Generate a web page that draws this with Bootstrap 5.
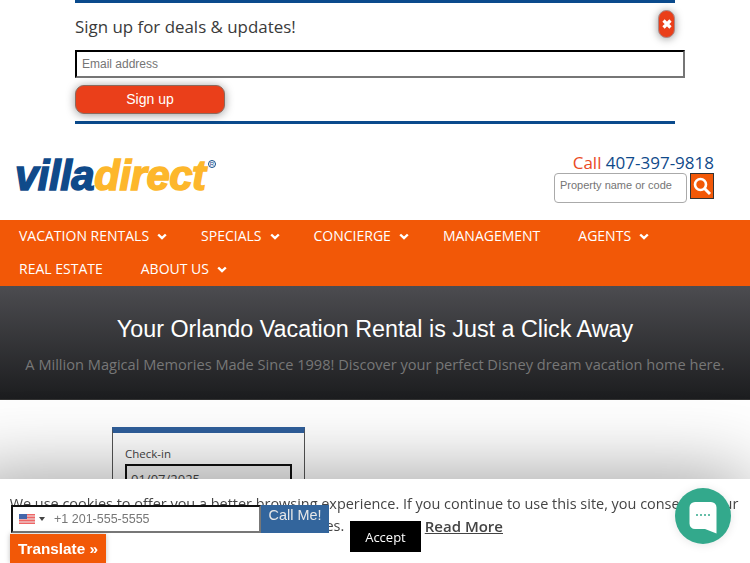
<!DOCTYPE html>
<html lang="en">
<head>
  <meta charset="UTF-8">
  <title>Villa Direct</title>
  <link href="https://cdn.jsdelivr.net/npm/bootstrap@5.3.2/dist/css/bootstrap.min.css" rel="stylesheet">
  <style>
    html, body { height: 563px; overflow: hidden; }
    body { font-family: "Open Sans", sans-serif; color: #333; background: #fff; }
    .signup-box { width: 600px; height: 124px; margin-left: 75px; border-top: 3px solid #0a4a8c; border-bottom: 3px solid #0a4a8c; position: relative; }
    .signup-title { font-size: 16.9px; line-height: 24px; padding-top: 12px; margin: 0 0 11px; color: #3a3a3a; }
    .signup-input { display: block; width: 610px; height: 28px; border: 2px inset #555; border-color: #111 #767676 #767676 #111; font: 12px "Liberation Sans", sans-serif; padding: 0 5px; }
    .signup-input::placeholder, .search-input::placeholder { color: #757575; opacity: 1; }
    .signup-btn { display: block; width: 150px; height: 29px; margin-top: 7px; background: #ea3f1a; color: #fff; border: 1px solid #8a6a5e; border-radius: 9px; font: 14px "Liberation Sans", sans-serif; box-shadow: 0 1px 10px rgba(0,0,0,.4); padding: 0 0 2px; }
    .close-pill { position: absolute; left: 583px; top: 7px; width: 17px; height: 28px; border-radius: 9px; background: #ea3f1a; border: 1px solid #a88; box-shadow: 0 1px 8px rgba(0,0,0,.4); display: flex; align-items: center; justify-content: center; }
    .site-head { height: 96px; padding: 0 36px 0 15px; }
    .brand-logo { font: italic 900 42px/1 "Liberation Sans", sans-serif; letter-spacing: -.5px; -webkit-text-stroke: 1.5px currentColor; position: relative; margin-top: 31px; white-space: nowrap; height: 42px; }
    .brand-blue { color: #0f4a8a; }
    .brand-gold { color: #fdb72b; }
    .brand-reg { position: absolute; left: 193px; top: 5px; width: 8px; height: 8px; border: 1px solid #0f4a8a; border-radius: 50%; font: 6px/6px "Liberation Sans", sans-serif; text-align: center; color: #0f4a8a; -webkit-text-stroke: 0; letter-spacing: 0; }
    .call-line { font-size: 17px; line-height: 21px; color: #0f4a8a; margin-top: 28px; text-align: right; }
    .call-word { color: #ea4a1f; }
    .search-input { width: 133px; height: 30px; border: 1px solid #aaa; border-radius: 4px; font: 11px "Liberation Sans", sans-serif; padding: 0 5px 6px; }
    .search-btn { width: 24px; height: 26px; background: #f25807; border: 1px solid #333; display: flex; align-items: center; justify-content: center; margin-left: 3px; }
    .main-nav { height: 66px; background: #f25807; padding-left: 19px; }
    .nav-entry { color: #fff; font-size: 14px; height: 33px; padding-bottom: 2px; text-decoration: none; white-space: nowrap; display: flex; align-items: center; gap: 8px; margin-right: 34px; }
    .nav-plain { margin-right: 38px; }
    .nav-entry svg { margin-top: 1px; }
    .hero-band { height: 114px; background: linear-gradient(#4c4c50, #1c1d1f); border-bottom: 1px solid #333; text-align: center; padding-top: 27px; }
    .hero-title { font: 23.3px/32px "Liberation Sans", sans-serif; color: #fff; margin: 0; }
    .hero-sub { font-size: 14.6px; line-height: 22px; color: #777; margin: 8px 0 0; }
    .booking-card { width: 193px; height: 100px; margin: 27px 0 0 112px; border: 1px solid #555; border-top: 6px solid #2f5f9c; padding: 12px; font-size: 11.5px; color: #444; }
    .booking-date { height: 30px; border: 2px solid #111; margin-top: 2px; padding: 4px; font-size: 13px; color: #444; background: #f4f4f4; }
    .cookie-bar { position: fixed; left: -40px; right: 0; top: 479px; height: 84px; background: #fff; text-align: center; font-size: 14.45px; line-height: 22px; color: #444; padding: 14px 10px 0 48px; box-shadow: 0 0 80px rgba(0,0,0,.42); }
    .accept-btn { background: #000; color: #fff; border: 0; width: 71px; height: 31px; font-size: 13px; padding: 0; margin: 6px 0 0 2px; vertical-align: top; }
    .read-more { color: #444; font-weight: 600; font-size: 15px; vertical-align: top; }
    .call-widget { position: fixed; left: 11px; top: 505px; height: 28px; }
    .call-field { width: 250px; height: 28px; border: 2px solid #111; border-right-color: #777; border-bottom-color: #777; background: #fff; font: 12.5px "Liberation Sans", sans-serif; color: #777; padding-left: 6px; gap: 4px; }
    .call-btn { width: 68px; height: 28px; background: #33659c; color: #e8e8e8; border: 0; font: 14.4px/20px "Liberation Sans", sans-serif; padding: 0 0 8px; }
    .drop-caret { width: 0; height: 0; border: 3px solid transparent; border-top: 4px solid #444; border-bottom: 0; margin-right: 5px; }
    .translate-tab { position: fixed; left: 10px; top: 534px; width: 96px; height: 29px; background: #f25807; color: #fff; font: bold 15.3px/29px "Liberation Sans", sans-serif; text-align: center; box-shadow: 0 0 5px rgba(0,0,0,.25); }
    .chat-bubble { position: fixed; left: 675px; top: 488px; width: 56px; height: 56px; border-radius: 50%; background: #33a98c; box-shadow: 0 1px 10px rgba(0,0,0,.1); display: flex; align-items: center; justify-content: center; }
    .chat-bubble svg { margin-top: 3px; }
  </style>
</head>
<body>
  <div class="signup-box">
    <p class="signup-title">Sign up for deals &amp; updates!</p>
    <input type="text" class="signup-input" placeholder="Email address">
    <button type="button" class="signup-btn">Sign up</button>
    <div class="close-pill">
      <svg width="12" height="12" viewBox="0 0 12 12"><path d="M2.500 2.500l7 7M9.500 2.500l-7 7" stroke="#fff" stroke-width="3.2"/></svg>
    </div>
  </div>

  <div class="site-head d-flex justify-content-between">
    <div class="brand-logo"><span class="brand-blue">villa</span><span class="brand-gold">direct</span><span class="brand-reg">R</span></div>
    <div>
      <div class="call-line"><span class="call-word">Call</span> 407-397-9818</div>
      <div class="d-flex">
        <input type="text" class="search-input" placeholder="Property name or code">
        <div class="search-btn">
          <svg width="20" height="20" viewBox="0 0 20 20" fill="none" stroke="#fff"><circle cx="8.5" cy="8.5" r="5.5" stroke-width="2.6"/><path d="M12.5 12.5l5.5 5.5" stroke-width="3"/></svg>
        </div>
      </div>
    </div>
  </div>

  <nav class="main-nav">
    <div class="d-flex">
      <a class="nav-entry" href="#">VACATION RENTALS <svg width="10" height="7" viewBox="0 0 10 7" fill="none"><path d="M1.200 1.500L5 5.200l3.800-3.700" stroke="#fff" stroke-width="2.400"/></svg></a>
      <a class="nav-entry" href="#">SPECIALS <svg width="10" height="7" viewBox="0 0 10 7" fill="none"><path d="M1.200 1.500L5 5.200l3.800-3.700" stroke="#fff" stroke-width="2.400"/></svg></a>
      <a class="nav-entry" href="#">CONCIERGE <svg width="10" height="7" viewBox="0 0 10 7" fill="none"><path d="M1.200 1.500L5 5.200l3.800-3.700" stroke="#fff" stroke-width="2.400"/></svg></a>
      <a class="nav-entry nav-plain" href="#">MANAGEMENT</a>
      <a class="nav-entry" href="#">AGENTS <svg width="10" height="7" viewBox="0 0 10 7" fill="none"><path d="M1.200 1.500L5 5.200l3.800-3.700" stroke="#fff" stroke-width="2.400"/></svg></a>
    </div>
    <div class="d-flex">
      <a class="nav-entry nav-plain" href="#">REAL ESTATE</a>
      <a class="nav-entry" href="#">ABOUT US <svg width="10" height="7" viewBox="0 0 10 7" fill="none"><path d="M1.200 1.500L5 5.200l3.800-3.700" stroke="#fff" stroke-width="2.400"/></svg></a>
    </div>
  </nav>

  <section class="hero-band">
    <h1 class="hero-title">Your Orlando Vacation Rental is Just a Click Away</h1>
    <p class="hero-sub">A Million Magical Memories Made Since 1998! Discover your perfect Disney dream vacation home here.</p>
  </section>

  <div class="booking-card">
    Check-in
    <div class="booking-date">01/07/2025</div>
  </div>

  <div class="cookie-bar">
    We use cookies to offer you a better browsing experience. If you continue to use this site, you consent to our use of cookies. <button type="button" class="accept-btn">Accept</button> <a class="read-more" href="#">Read More</a>
  </div>

  <div class="call-widget d-flex">
    <div class="call-field d-flex align-items-center">
      <svg width="16" height="10" viewBox="0 0 16 10"><rect width="16" height="10" fill="#e66"/><path d="M0 2h16M0 5h16M0 8h16" stroke="#eee"/><rect width="8" height="5" fill="#46a"/></svg>
      <span class="drop-caret"></span>
      <span>+1 201-555-5555</span>
    </div>
    <button type="button" class="call-btn">Call Me!</button>
  </div>
  <div class="translate-tab">Translate »</div>
  <div class="chat-bubble">
    <svg width="28" height="34" viewBox="0 0 28 34"><path d="M6 1h16a5.500 5.500 0 0 1 5.500 5.500V32.500L16 28H6a5.500 5.500 0 0 1-5.500-5.500V6.500A5.500 5.500 0 0 1 6 1z" fill="#fff"/><path d="M7 14h2M11 14h2M15 14h2M19 14h2" stroke="#33a98c" stroke-width="1.500"/></svg>
  </div>
</body>
</html>
